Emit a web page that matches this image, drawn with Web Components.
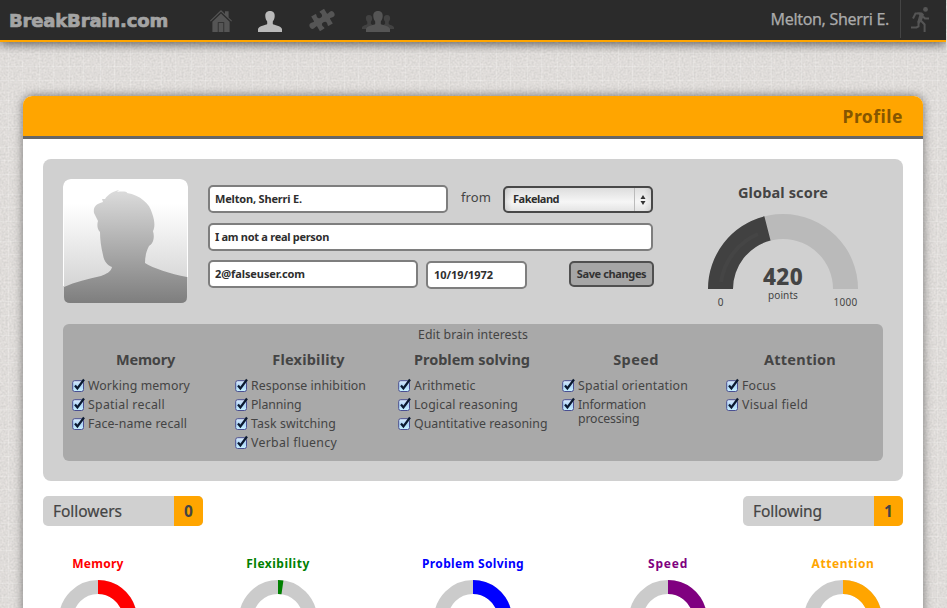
<!DOCTYPE html>
<html lang="en">
<head>
<meta charset="utf-8">
<title>BreakBrain.com - Profile</title>
<style>
html,body{margin:0;height:100%;overflow:hidden}
body{font-family:"Noto Sans","Open Sans",sans-serif;color:#444;background:#dfdcda}
</style>
</head>
<body>
<bb-app></bb-app>
<script>
class Base extends HTMLElement{
  connectedCallback(){
    if(this.shadowRoot)return;
    this.attachShadow({mode:'open'}).innerHTML=this.render();
    if(this.ready)this.ready();
  }
  a(n,d=''){return this.getAttribute(n)??d}
}

/* One line of text, tracked so that it fills the width given in "w". */
customElements.define('ui-text',class extends Base{
  render(){return `<style>:host{display:inline-block;white-space:nowrap;text-align:left;vertical-align:top;width:${this.a('w')}px}span{display:inline-block}</style><span><slot></slot></span>`}
  ready(){
    const s=this.shadowRoot.querySelector('span'),n=this.textContent.length;
    const d=+this.a('w')-s.getBoundingClientRect().width;
    s.style.letterSpacing=(d/n).toFixed(3)+'px';
  }
});

const SIDE='M7 4c2.300 0 3.200 1.500 3.100 3.500-.1 1.700-.7 2.600-1.200 3.300V13l3.100 1.500V18H0V16.500C.4 14.300 4.600 14 5.300 13V10.800C4.700 10 4 9.200 3.900 7.500 3.800 5.500 4.700 4 7 4Z';
const BUST='M12 0C15.400 0 16.900 2.200 16.700 5.200 16.600 7.800 15.600 9.300 14.800 10.500V13C15.800 14.200 23.300 14.700 24 18V21H0V18C.7 14.700 8.200 14.200 9.200 13V10.500C8.400 9.300 7.400 7.800 7.300 5.200 7.100 2.200 8.600 0 12 0Z';
const ICONS={
  home:[22,22,'<path fill-rule="evenodd" d="M11 3.400 19.600 11.800V22H2.400V11.800ZM7.800 12.200V22H8.600V13H13.400V22H14.200V12.200Z"/><path d="M11 0 15 3.900V1.300H18.600V7.400L22 10.800 21.300 11.600 11 1.800 .7 11.600 0 10.800Z"/>'],
  person:[24,21,`<path d="${BUST}"/>`],
  puzzle:[28,26,'<g transform="translate(14 13) rotate(-31)"><path d="M-7.500-8.500H-2.300C-1.500-7.500-2.700-6.800-2.700-5.200A2.700 2.500 0 0 0 2.700-5.200C2.700-6.800 1.500-7.500 2.300-8.500H7.500V-3C8.400-1.900 9.200-3.100 11-3.100A3.100 3.100 0 0 1 11 3.100C9.200 3.100 8.400 1.900 7.500 3V8.500H2.300C1.500 7.500 2.700 6.800 2.700 5.200A2.700 2.500 0 0 0-2.700 5.200C-2.700 6.800-1.500 7.500-2.300 8.500H-7.500V3C-8.400 1.900-9.200 3.100-11 3.100A3.100 3.100 0 0 1-11-3.100C-9.200-3.100-8.400-1.900-7.500-3Z"/></g>'],
  group:[32,21,`<g opacity=".55"><path d="${SIDE}"/><path transform="matrix(-1 0 0 1 32 0)" d="${SIDE}"/></g><path transform="translate(4 0)" d="${BUST}"/>`],
  run:[18,25,'<circle cx="14.500" cy="2.400" r="2.400"/><path fill="none" stroke="currentColor" stroke-width="2" d="M2 11.500 4.500 6.500H9.500M12 9.500 14 11.500H18M9.800 13.500 13.600 17.500V25M7.500 14.500V19.500L5.500 20.500H0"/><path d="M6 5.500H11L13 7.500 10.700 14 8 17 6.300 15 8.300 8Z"/>']
};
customElements.define('bb-icon',class extends Base{
  render(){const [w,h,p]=ICONS[this.a('name')];return `<style>:host{display:block;width:${w}px;height:${h}px}svg{display:block}</style><svg width="${w}" height="${h}" viewBox="0 0 ${w} ${h}" fill="currentColor">${p}</svg>`}
});

customElements.define('bb-header',class extends Base{
  render(){return `<style>
  :host{display:flex;height:40px;background:#2b2b2b;border-bottom:2px solid orange;box-shadow:0 2px 10px rgba(0,0,0,.6);box-sizing:content-box;position:relative;color:#555}
  .logo{font:bold 18px/40px "DejaVu Sans","Liberation Sans",sans-serif;color:#a4a4a4;-webkit-text-stroke:.7px #a4a4a4;padding:1px 0 0 9px;width:201px;height:39px}
  nav{display:flex;flex:1}
  .on{color:#bababa}
  .user{font-size:16px;line-height:38px;color:#aaa;padding-right:11px;-webkit-text-stroke:.25px #aaa}
  .out{width:46px;height:38px;border-left:1px solid #444;padding:7px 0 0 10px;box-sizing:border-box}
  </style>
  <div class="logo"><ui-text w="159">BreakBrain.com</ui-text></div>
  <nav><bb-icon name="home" style="margin:10px 26px 0 0"></bb-icon><bb-icon class="on" name="person" style="margin:11px 26px 0 0"></bb-icon><bb-icon name="puzzle" style="margin:7px 26px 0 0"></bb-icon><bb-icon name="group" style="margin-top:11px"></bb-icon></nav>
  <div class="user"><ui-text w="118.500">Melton, Sherri E.</ui-text></div><div class="out"><bb-icon name="run"></bb-icon></div>`}
});

customElements.define('bb-card',class extends Base{
  render(){return `<style>
  :host{display:block;width:900px;height:560px;background:#fff;border-radius:9px 9px 0 0;box-shadow:0 0 10px rgba(0,0,0,.5);overflow:hidden}
  header{height:40px;background:#ffa500;border-bottom:3px solid #666;text-align:right;padding-right:20px;font:bold 17.500px/40px "Noto Sans",sans-serif;color:#855600}
  div{padding:20px}
  </style><header><ui-text w="60.500">${this.a('heading')}</ui-text></header><div><slot></slot></div>`}
});

customElements.define('bb-avatar',class extends Base{
  render(){return `<style>:host{display:block;width:125px;height:124px;border-radius:8px 8px 5px 5px;overflow:hidden}svg{display:block}</style>
  <svg width="125" height="124" viewBox="0 0 125 124"><defs>
  <linearGradient id="b" x2="0" y2="1"><stop offset=".2" stop-color="#fff"/><stop offset="1" stop-color="#ccc"/></linearGradient>
  <linearGradient id="p" x2="0" y2="1"><stop stop-color="#dcdcdc"/><stop offset="1" stop-color="#7e7e7e"/></linearGradient></defs>
  <rect width="125" height="124" rx="7" fill="url(#b)"/>
  <path fill="url(#p)" d="M1 108C12 103 25 100 38 97 43 95 48 93 49 88 44 86 41 82 40 76 38 68 37 60 37 53 34 50 34 45 35 42L31 34C30 28 33 25 40 23L39 20 42 20C45 15 51 12 56 11L54 13C60 12 65 13 64 14 77 16 87 25 89 34 92 42 92 48 90 52 92 59 90 65 86 67 83 73 82 78 82 84 90 89 107 95 124 98V118Q124 124 118 124H7Q1 124 1 118Z"/>
  <path d="M.5 8V107M124.500 8V98" stroke="#fff"/></svg>`}
});

customElements.define('bb-field',class extends Base{
  render(){return `<style>:host{display:block;box-sizing:border-box;width:${this.a('width')}px;height:28px;background:#fff;border:2px solid #7e7e7e;border-radius:5px;padding-left:5px;font-weight:bold;font-size:11px;line-height:24px;color:#2e2e2e}
  :host([select]){height:27px;line-height:22px;padding:0 0 0 8px;border-color:#484848;background:linear-gradient(90deg,rgba(0,0,0,.1),transparent 7px,transparent calc(100% - 7px),rgba(0,0,0,.08)),linear-gradient(#ddd,#f6f6f6 60%,#e4e4e4);display:flex;justify-content:space-between}
  i{width:16px;border-left:1px solid #bbb;display:grid;place-items:center}
  </style><ui-text w="${this.a('tw')}">${this.a('value')}</ui-text>${this.hasAttribute('select')?'<i><svg width="6" height="10" fill="#333"><path d="M3 0 5.500 4H.5ZM3 10 5.500 6H.5Z"/></svg></i>':''}`}
});

customElements.define('bb-form',class extends Base{
  render(){return `<style>:host{display:block;width:446px;padding-top:6px}.r{display:flex;align-items:flex-start}
  .from{font-size:13px;line-height:25px;padding:0 12px 0 13px}
  button{all:unset;box-sizing:border-box;width:85px;height:26px;margin:1px 0 0 42px;border:2px solid #505050;border-radius:5px;background:#a6a6a6;color:#333;font:bold 11px/20px "Noto Sans",sans-serif;text-align:center}
  </style>
  <div class="r"><bb-field width="240" tw="87" value="Melton, Sherri E."></bb-field><span class="from"><ui-text w="30">from</ui-text></span><bb-field style="margin-top:1px" select width="150" tw="46" value="Fakeland"></bb-field></div>
  <div class="r" style="margin:10px 0 9px"><bb-field width="445" tw="114" value="I am not a real person"></bb-field></div>
  <div class="r"><bb-field width="210" tw="90" value="2@falseuser.com"></bb-field><bb-field style="margin:1px 0 0 8px;padding-left:6px" width="101" tw="59" value="10/19/1972"></bb-field><button><ui-text w="69.500">Save changes</ui-text></button></div>`}
});

customElements.define('bb-gauge',class extends Base{
  render(){
    const t=Math.PI*(1-.42),c=Math.cos(t),s=Math.sin(t),pt=r=>`${75+r*c} ${75-r*s}`;
    return `<style>:host{display:block;width:150px;text-align:center;padding-top:3px}
    h3{margin:0;font-size:14.500px;line-height:20px}
    .g{display:grid;margin-top:12px;grid-template:75px/150px}.g>*{grid-area:1/1}
    .v{align-self:end;font-weight:800;font-size:22.500px;line-height:24px}
    .l{display:grid;grid-template-columns:25px 1fr 25px;font-size:10px;line-height:12px}
    .l span{padding-top:7px}</style>
    <h3><ui-text w="90">Global score</ui-text></h3>
    <div class="g"><svg width="150" height="75"><path fill="#bababa" d="M0 75A75 75 0 0 1 150 75H125A50 50 0 0 0 25 75Z"/><path fill="#414141" d="M0 75A75 75 0 0 1 ${pt(75)}L${pt(50)}A50 50 0 0 0 25 75Z"/><path fill="none" stroke="#454545" stroke-width="4" d="M13 68A62 62 0 0 1 50 20"/></svg>
    <div class="v"><ui-text w="40">420</ui-text></div></div>
    <div class="l"><span>0</span><div><ui-text w="30">points</ui-text></div><span><ui-text w="24">1000</ui-text></span></div>`}
});

customElements.define('bb-check',class extends Base{
  render(){
    const [t,w]=this.a('label').split(':');
    return `<style>:host{display:flex;gap:2px;font-size:12.300px;line-height:14px;margin-bottom:5px}svg{display:block;flex:none;margin:-1px 0}.wrap{width:90px;letter-spacing:-.15px}</style>
    <svg width="14" height="16" viewBox="0 0 14 16"><defs><linearGradient id="c" x2="0" y2="1"><stop stop-color="#dcebfa"/><stop offset=".5" stop-color="#aed6f8"/><stop offset="1" stop-color="#c9f2ff"/></linearGradient></defs><rect x=".7" y="2.700" width="10.800" height="10.800" rx="2" fill="url(#c)" stroke="#4a4f91"/><path d="M3 7.500 5.400 10.500 12 1.500" fill="none" stroke="#0b1930" stroke-width="2.200"/></svg>
    ${w?`<ui-text w="${w}">${t}</ui-text>`:`<div class="wrap">${t}</div>`}`}
});

const AREAS=[
 ['Memory',59,['Working memory:102','Spatial recall:77','Face-name recall:99']],
 ['Flexibility',72.5,['Response inhibition:115','Planning:50.5','Task switching:85','Verbal fluency:86']],
 ['Problem solving',116,['Arithmetic:61.5','Logical reasoning:104','Quantitative reasoning:133.5']],
 ['Speed',45.5,['Spatial orientation:110','Information processing']],
 ['Attention',72,['Focus:34','Visual field:66']]];
customElements.define('bb-interests',class extends Base{
  render(){return `<style>:host{display:block;box-sizing:border-box;height:137px;background:#a9a9a9;border-radius:6px;padding:2px 1px}
  p{margin:0;text-align:center;font-size:12.300px;line-height:17px}
  .g{display:grid;grid-template-columns:163px 163px 164px 164px 164px}
  h3{margin:6px 0 10px;text-align:center;font-size:14.500px;line-height:20px}
  .c{padding-left:8px}</style><p><ui-text w="110">Edit brain interests</ui-text></p>
  <div class="g">${AREAS.map(([t,w,l])=>`<section><h3><ui-text w="${w}">${t}</ui-text></h3><div class="c">${l.map(x=>`<bb-check label="${x}"></bb-check>`).join('')}</div></section>`).join('')}</div>`}
});

customElements.define('bb-profile',class extends Base{
  render(){return `<style>:host{display:block;box-sizing:border-box;height:322px;padding:20px;background:#d0d0d0;border-radius:8px}
  .t{display:flex;height:145px}</style>
  <div class="t"><bb-avatar></bb-avatar><bb-form style="margin-left:20px"></bb-form><bb-gauge style="margin-left:54px"></bb-gauge></div><bb-interests></bb-interests>`}
});

customElements.define('bb-count',class extends Base{
  render(){return `<style>:host{display:flex;width:160px;height:30px;background:#d0d0d0;border-radius:5px;overflow:hidden;font-size:15.500px;line-height:30px}
  div{flex:1;padding-left:10px;-webkit-text-stroke:.2px #444}b{width:29px;background:#ffa500;text-align:center}</style><div><ui-text w="69">${this.a('label')}</ui-text></div><b><slot></slot></b>`}
});

customElements.define('bb-ring',class extends Base{
  render(){
    const t=+this.a('deg')*Math.PI/180,x=Math.sin(t),y=-Math.cos(t);
    return `<style>:host{display:block;text-align:center;font-weight:bold;font-size:12px;line-height:18px}svg{display:block;margin:7px auto 0}</style>
    <ui-text w="${this.a('w')}" style="color:${this.a('color')}">${this.a('label')}</ui-text>
    <svg width="78" height="78" viewBox="-39 -39 78 78"><circle r="32" fill="none" stroke="#cbcbcb" stroke-width="14"/><path fill="${this.a('color')}" d="M0-39A39 39 0 0 1 ${39*x} ${39*y}L${25*x} ${25*y}A25 25 0 0 0 0-25Z"/></svg>`}
});

customElements.define('bb-texture',class extends Base{
  render(){return `<style>:host{position:absolute;inset:0}svg{display:block}</style><svg width="947" height="608"><defs>
  <filter id="n" x="0" y="0" width="100%" height="100%" color-interpolation-filters="sRGB"><feTurbulence type="fractalNoise" baseFrequency=".5" numOctaves="2" seed="4"/><feColorMatrix values=".13 0 0 0 .808  .12 .01 0 0 .796  .12 0 .01 0 .787  0 0 0 0 1"/></filter>
  <pattern id="g" width="61" height="47" patternUnits="userSpaceOnUse"><path d="M8.500 0V47M22.500 0V47M39.500 0V47M53.500 0V47M0 6.500H61M0 19.500H61M0 33.500H61" stroke="#fff" stroke-opacity=".16"/></pattern></defs>
  <rect width="947" height="608" filter="url(#n)"/><rect width="947" height="608" fill="url(#g)"/></svg>`}
});

customElements.define('bb-app',class extends Base{
  render(){return `<style>:host{display:block;position:relative;width:947px;height:608px;overflow:hidden}
  main{position:relative;width:946px;height:608px;overflow:hidden}
  bb-card{margin:54px 0 0 23px}
  .f{display:flex;justify-content:space-between;margin-top:15px}
  .r{display:grid;grid-template-columns:110px 250px 140px 250px 100px;margin-top:29px}</style>
  <bb-texture></bb-texture>
  <main><bb-header></bb-header><bb-card heading="Profile"><bb-profile></bb-profile>
  <div class="f"><bb-count label="Followers">0</bb-count><bb-count label="Following">1</bb-count></div>
  <div class="r"><bb-ring label="Memory" w="51.500" color="#f00" deg="150"></bb-ring><bb-ring label="Flexibility" w="63.500" color="#008000" deg="8"></bb-ring><bb-ring label="Problem Solving" w="102" color="#00f" deg="150"></bb-ring><bb-ring label="Speed" w="40" color="#800080" deg="150"></bb-ring><bb-ring label="Attention" w="63" color="#ffa500" deg="150"></bb-ring></div>
  </bb-card></main>`}
});
</script>
</body>
</html>
